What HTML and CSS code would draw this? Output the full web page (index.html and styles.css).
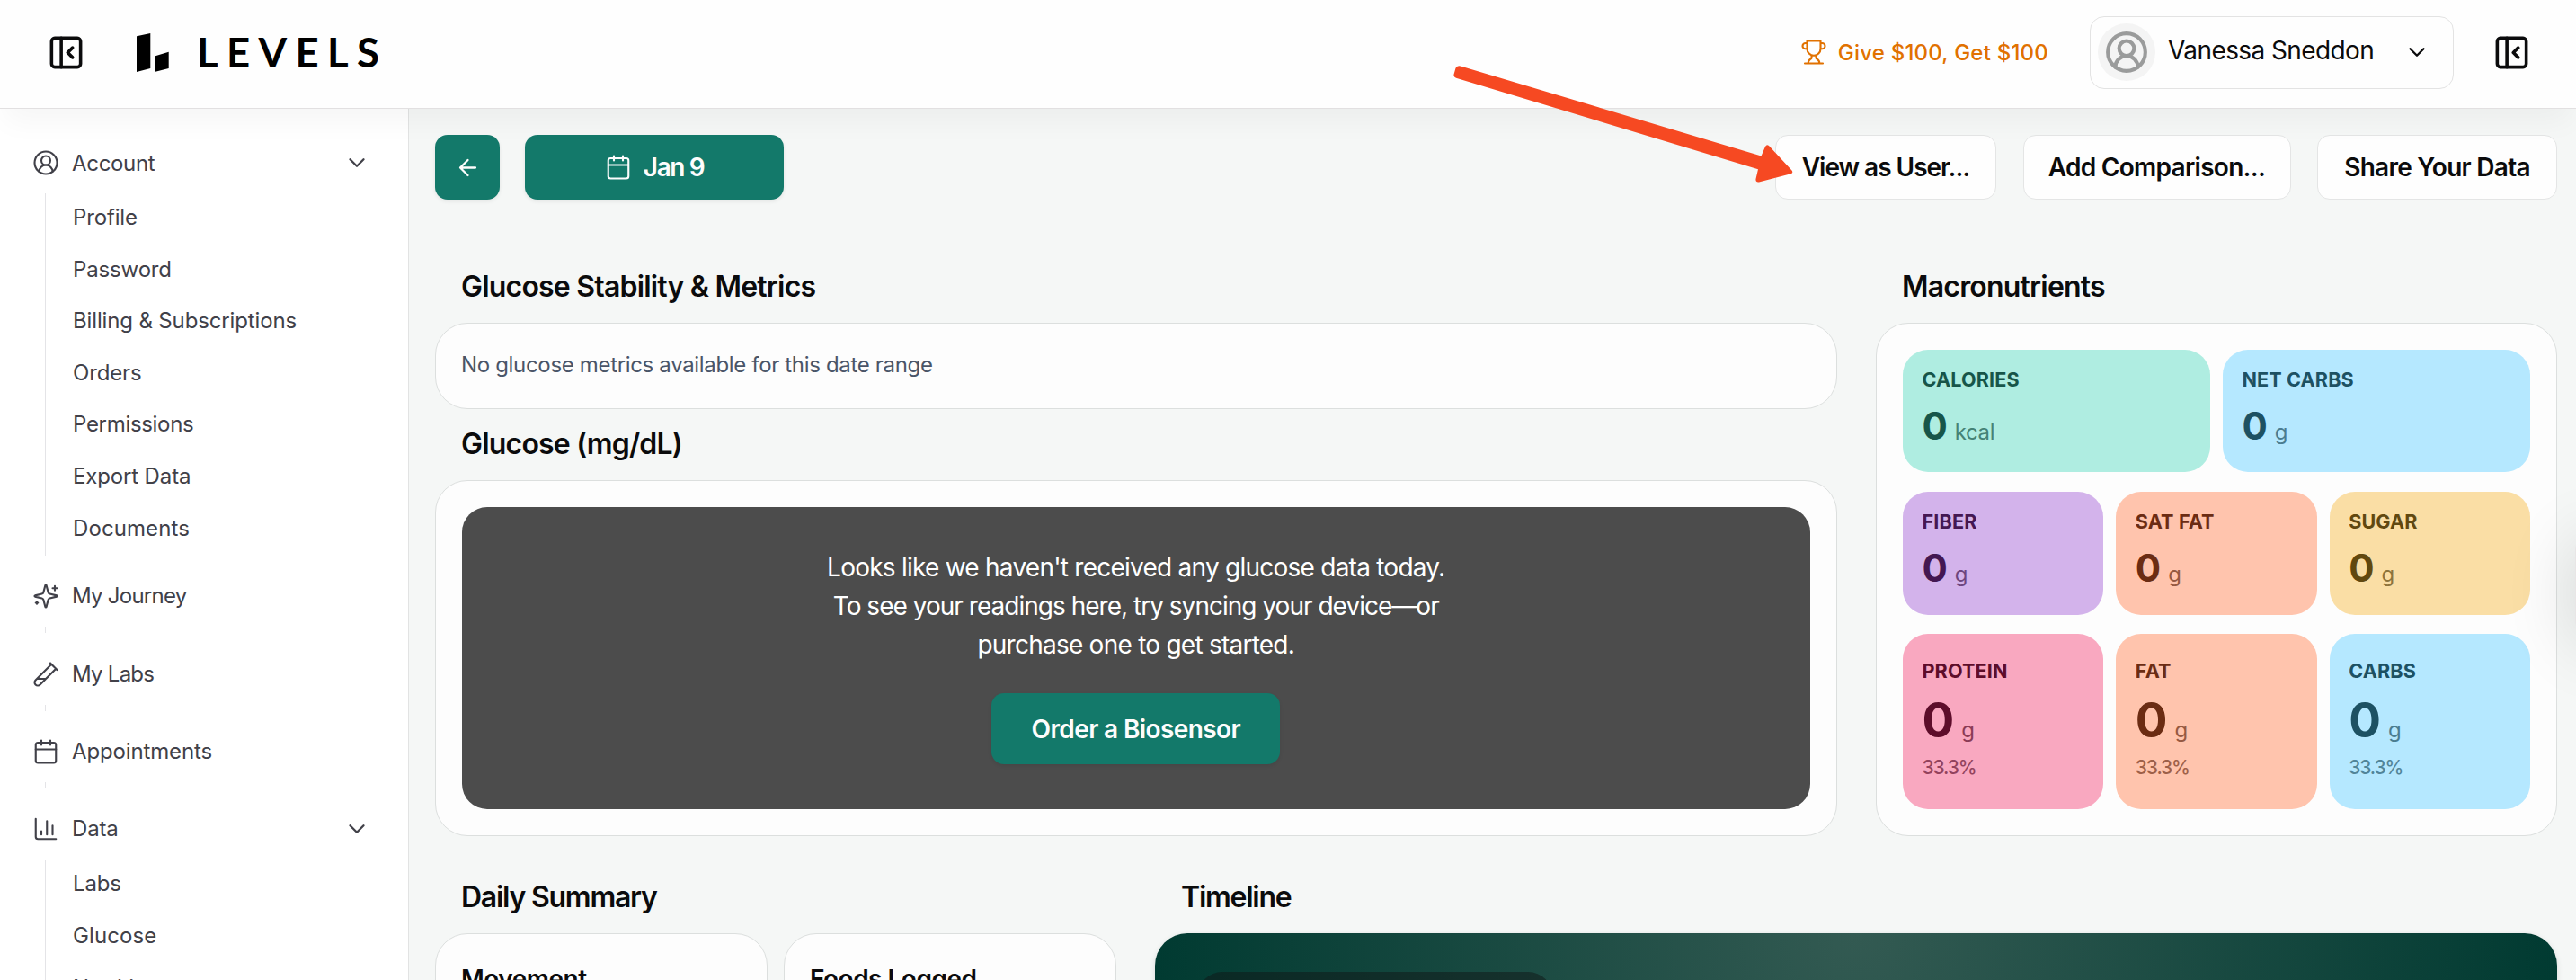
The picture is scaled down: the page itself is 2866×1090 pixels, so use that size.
FILE: index.html
```html
<!DOCTYPE html>
<html lang="en">
<head>
<meta charset="utf-8">
<title>Levels</title>
<link rel="stylesheet" href="styles.css">
</head>
<body>
<svg class="sprite" aria-hidden="true">
  <symbol id="panel" viewBox="0 0 24 24"><rect x="3" y="3" width="18" height="18" rx="2"/><path d="M9 3v18M16 15l-3-3 3-3"/></symbol>
  <symbol id="chevron" viewBox="0 0 24 24"><path d="m6 9 6 6 6-6"/></symbol>
  <symbol id="user" viewBox="0 0 24 24"><path d="M18 20a6 6 0 0 0-12 0"/><circle cx="12" cy="10" r="4"/><circle cx="12" cy="12" r="10"/></symbol>
  <symbol id="calendar" viewBox="0 0 24 24"><path d="M8 2v4M16 2v4M3 10h18"/><rect x="3" y="4" width="18" height="18" rx="2"/></symbol>
</svg>

<header class="header">
  <svg class="icon panel-icon"><use href="#panel"/></svg>
  <div class="brand">
    <svg class="mark" viewBox="0 0 36 43"><path d="M0 3.3 15.3 0v39L0 43zM20 25.4l15.7-4.7V39L20 43z"/></svg>
    <span class="wordmark">LEVELS</span>
  </div>
  <a class="referral">
    <svg class="icon" viewBox="0 0 24 24"><path d="M6 9H4.5a2.5 2.5 0 0 1 0-5H6M18 9h1.5a2.5 2.5 0 0 0 0-5H18M4 22h16M10 14.66V17c0 .55-.47.98-.97 1.21C7.85 18.75 7 20.24 7 22M14 14.66V17c0 .55.47.98.97 1.21C16.15 18.75 17 20.24 17 22M18 2H6v7a6 6 0 0 0 12 0V2Z"/></svg>
    <span>Give $100, Get $100</span>
  </a>
  <div class="account-menu">
    <span class="avatar"><svg class="icon"><use href="#user"/></svg></span>
    <span class="name">Vanessa Sneddon</span>
    <svg class="icon"><use href="#chevron"/></svg>
  </div>
  <svg class="icon panel-icon"><use href="#panel"/></svg>
</header>

<div class="body">
  <nav class="sidebar">
    <div class="item"><svg class="icon"><use href="#user"/></svg><span class="snug">Account</span><svg class="icon caret"><use href="#chevron"/></svg></div>
    <div class="sub">
      <a>Profile</a><a>Password</a><a>Billing &amp; Subscriptions</a><a>Orders</a><a class="snug">Permissions</a><a>Export Data</a><a class="loose">Documents</a>
    </div>
    <div class="item"><svg class="icon" viewBox="0 0 24 24"><path d="M9.937 15.5A2 2 0 0 0 8.5 14.063l-6.135-1.582a.5.5 0 0 1 0-.962L8.5 9.936A2 2 0 0 0 9.937 8.5l1.582-6.135a.5.5 0 0 1 .963 0L14.063 8.5A2 2 0 0 0 15.5 9.937l6.135 1.581a.5.5 0 0 1 0 .964L15.5 14.063a2 2 0 0 0-1.437 1.437l-1.582 6.135a.5.5 0 0 1-.963 0zM20 3v4M22 5h-4M4 17v2M5 18H3"/></svg><span class="tight">My Journey</span></div>
    <div class="sub"></div>
    <div class="item"><svg class="icon" viewBox="0 0 24 24"><path d="M21 7 6.82 21.18a2.83 2.83 0 0 1-3.99-.01a2.83 2.83 0 0 1 0-4L17 3M16 2l6 6M12 16H4"/></svg><span class="tight">My Labs</span></div>
    <div class="sub"></div>
    <div class="item"><svg class="icon"><use href="#calendar"/></svg><span>Appointments</span></div>
    <div class="sub"></div>
    <div class="item"><svg class="icon" viewBox="0 0 24 24"><path d="M3 3v16a2 2 0 0 0 2 2h16M18 17V9M13 17V5M8 17v-3"/></svg><span>Data</span><svg class="icon caret"><use href="#chevron"/></svg></div>
    <div class="sub">
      <a>Labs</a><a class="loose">Glucose</a><a>Nutrition</a>
    </div>
  </nav>

  <main class="main">
    <div class="toolbar">
      <button class="btn primary back"><svg class="icon" viewBox="0 0 24 24"><path d="m12 19-7-7 7-7M19 12H5"/></svg></button>
      <button class="btn primary date"><svg class="icon"><use href="#calendar"/></svg><span>Jan 9</span></button>
      <button class="btn plain view"><span>View as User...</span></button>
      <button class="btn plain compare"><span>Add Comparison...</span></button>
      <button class="btn plain share"><span>Share Your Data</span></button>
    </div>

    <div class="overview">
      <section class="glucose">
        <h2>Glucose Stability &amp; Metrics</h2>
        <div class="card notice">No glucose metrics available for this date range</div>
        <h2>Glucose (mg/dL)</h2>
        <div class="card chart">
          <div class="empty">
            <p>Looks like we haven't received any glucose data today.<br><span class="condensed">To see your readings here, try syncing your device—or</span><br>purchase one to get started.</p>
            <button class="btn primary order">Order a Biosensor</button>
          </div>
        </div>
      </section>
      <section class="macros">
        <h2>Macronutrients</h2>
        <div class="card tiles">
          <div class="tile half mint"><b>CALORIES</b><div><strong>0</strong><i>kcal</i></div></div>
          <div class="tile half blue"><b>NET CARBS</b><div><strong>0</strong><i>g</i></div></div>
          <div class="tile purple"><b>FIBER</b><div><strong>0</strong><i>g</i></div></div>
          <div class="tile peach"><b>SAT FAT</b><div><strong>0</strong><i>g</i></div></div>
          <div class="tile yellow"><b>SUGAR</b><div><strong>0</strong><i>g</i></div></div>
          <div class="tile big pink"><b>PROTEIN</b><div><strong>0</strong><i>g</i></div><em>33.3%</em></div>
          <div class="tile big peach"><b>FAT</b><div><strong>0</strong><i>g</i></div><em>33.3%</em></div>
          <div class="tile big blue"><b>CARBS</b><div><strong>0</strong><i>g</i></div><em>33.3%</em></div>
        </div>
      </section>
    </div>

    <div class="day">
      <section>
        <h2 class="close">Daily Summary</h2>
        <div class="summary">
          <div class="card metric">Movement</div>
          <div class="card metric">Foods Logged</div>
        </div>
      </section>
      <section>
        <h2 class="close">Timeline</h2>
        <div class="timeline"><div class="entry"></div></div>
      </section>
    </div>
  </main>
</div>

<div class="edge-widget"></div>
<svg class="pointer" viewBox="0 0 384 136"><path d="M9 4.5 343.5 104.500l4.500-10.500q1.500-3 4-1l25.500 27.500q2 2.800-1 3.800L341 133.500q-4 .5-3.500-3.500L340 119.200 4 17.700q-3-1-2.500-4L3.500 6.800q1.500-3.500 5.500-2.300z"/></svg>
</body>
</html>
```
FILE: styles.css
```css
* { box-sizing: border-box; }

body {
  margin: 0;
  width: 2866px;
  height: 1090px;
  overflow: hidden;
  display: flex;
  flex-direction: column;
  font-family: "Inter", sans-serif;
  font-size: 24px;
  letter-spacing: -.006em;
  color: #0b0b0c;
  background: #f5f7f6;
}

h2, p { margin: 0; }
.sprite { display: none; }

.icon {
  width: 30px;
  height: 30px;
  flex: none;
  fill: none;
  stroke: currentColor;
  stroke-width: 1.7;
  stroke-linecap: round;
  stroke-linejoin: round;
}

.snug { letter-spacing: -.013em; }
.tight { letter-spacing: -.031em; }
.loose { letter-spacing: .004em; }

/* Header */
.header {
  position: relative;
  z-index: 2;
  flex: none;
  display: flex;
  align-items: center;
  height: 121px;
  padding: 0 50px 4px 52px;
  background: #fefefe;
  border-bottom: 1px solid #e2e0e1;
  box-shadow: 0 20px 30px -6px rgba(0, 0, 0, .04);
}
.panel-icon { width: 43px; height: 43px; stroke-width: 2; }
.brand { display: flex; align-items: center; margin: 0 auto 0 57px; color: #000; }
.mark { width: 36px; height: 43px; }
.wordmark {
  margin-left: 31px;
  font: 700 45.5px/44px "Lato", sans-serif;
  letter-spacing: .206em;
}
.referral {
  display: flex;
  align-items: center;
  gap: 12px;
  color: #e17100;
  font-weight: 500;
  letter-spacing: .009em;
}
.account-menu {
  display: flex;
  align-items: center;
  width: 405px;
  height: 81px;
  margin: 0 43px 0 46px;
  padding: 0 25px 0 8px;
  border: 1px solid #e3e3e3;
  border-radius: 16px;
}
.account-menu > .icon { stroke-width: 1.9; }
.avatar {
  display: flex;
  align-items: center;
  justify-content: center;
  width: 64px;
  height: 64px;
  border-radius: 50%;
  background: #f4f4f4;
  color: #9a9b9b;
}
.avatar .icon { width: 50px; height: 50px; stroke-width: 2; }
.name { margin: -4px auto 0 14px; font-size: 28px; letter-spacing: -.021em; }

.body { flex: 1; display: flex; min-height: 0; }

/* Sidebar */
.sidebar {
  flex: none;
  width: 455px;
  height: 969px;
  overflow: hidden;
  padding-top: 26px;
  background: #fff;
  border-right: 1px solid #e2e3e3;
  color: #414149;
}
.item { display: flex; align-items: center; height: 68px; padding: 0 42px 0 36px; }
.item span { margin-left: 14px; }
.item span:not(.snug) { margin-top: -1px; }
.caret { margin-left: auto; stroke-width: 1.9; }
.sub {
  min-height: 7px;
  margin: 0 0 11.3px 50px;
  border-left: 1px solid #e4e4e7;
}
.sub a { display: block; height: 57.6px; padding-left: 30px; line-height: 54px; }

/* Main */
.main { flex: 1; padding: 29px 21px 0 29px; height: 969px; overflow: hidden; }
.toolbar { display: flex; height: 72px; margin-bottom: 58px; }
.btn {
  display: flex;
  align-items: center;
  justify-content: center;
  padding: 0;
  border: 0;
  border-radius: 14px;
  font: 600 28px "Inter", sans-serif;
  color: inherit;
}
.primary { background: #13796a; color: #fdfdfd; box-shadow: 0 2px 4px rgba(0, 0, 0, .08); }
.plain { background: #fefefe; border: 1px solid #e4e5e5; margin-left: 29.5px; letter-spacing: -.026em; }
.back { width: 72px; }
.back .icon { width: 29px; height: 29px; stroke-width: 1.9; }
.date { width: 288px; margin: 0 auto 0 28px; gap: 13px; letter-spacing: -.05em; }
.view { width: 246px; letter-spacing: -.036em; }
.compare { width: 298px; }
.share { width: 267px; }

h2 {
  height: 79px;
  padding: 0 0 2px 29px;
  font-size: 32px;
  font-weight: 600;
  line-height: 77px;
  letter-spacing: -.025em;
}
h2.close { letter-spacing: -.039em; }
.card { background: #fdfdfd; border: 1px solid #dcdfde; border-radius: 36px; }

.overview { display: grid; grid-template-columns: 1559.5px 758px; gap: 43.5px; height: 649.5px; }
.glucose { display: flex; flex-direction: column; }
.notice { height: 96px; padding: 0 28px; line-height: 91px; color: #4a5568; letter-spacing: -.0139em; }
.chart { flex: 1; padding: 29px 28.5px; display: flex; }
.empty {
  flex: 1;
  display: flex;
  flex-direction: column;
  align-items: center;
  padding-top: 46px;
  border-radius: 28px;
  background: #4c4c4c;
  color: #fff;
}
.empty p { font-size: 28px; line-height: 43px; text-align: center; letter-spacing: -.027em; }
.condensed { letter-spacing: -.035em; }
.order { width: 321px; height: 79px; margin-top: 32px; letter-spacing: -.022em; }

/* Macro tiles */
.macros { display: flex; flex-direction: column; }
.tiles {
  flex: 1;
  display: grid;
  grid-template-columns: repeat(6, 1fr);
  grid-template-rows: 136px 137px 195px;
  column-gap: 14px;
  row-gap: 21.5px;
  padding: 29px;
}
.tile { grid-column: span 2; border-radius: 28px; padding: 18px 21.5px 0; }
.half { grid-column: span 3; }
.tile b { display: block; font-size: 21.6px; font-weight: 700; line-height: 30px; letter-spacing: .006em; }
.tile div { display: flex; align-items: baseline; margin-top: 11px; line-height: 52px; }
.tile strong { font-size: 42px; font-weight: 700; letter-spacing: 0; }
.tile i { margin-left: 8px; font-style: normal; letter-spacing: -.017em; opacity: .7; }
.tile em { display: block; margin-top: 3px; font-style: normal; font-size: 21px; font-weight: 500; line-height: 26px; letter-spacing: -.055em; opacity: .65; }
.big { padding-top: 26px; }
.big strong { font-size: 53px; }
.big div { margin-top: 14px; }
.mint { background: #afede1; color: #175549; }
.blue { background: #b5e8ff; color: #1d5163; }
.purple { background: #d3b3eb; color: #441752; }
.peach { background: #ffc4ad; color: #6b2c13; }
.yellow { background: #fadea5; color: #61480f; }
.pink { background: #f9a8c0; color: #5d0d2a; }

/* Lower row */
.day { display: grid; grid-template-columns: 757.5px 1560px; gap: 43.5px; margin-top: 29.5px; }
.summary { display: grid; grid-template-columns: 1fr 1fr; gap: 18.5px; }
.metric { height: 300px; padding: 26px 28px; font-size: 28px; font-weight: 600; line-height: 48px; letter-spacing: -.018em; }
.timeline {
  height: 300px;
  padding: 43px 47px;
  border-radius: 36px;
  background: radial-gradient(circle 790px at 50% 0, #335a52, #003a31);
  box-shadow: 0 2px 6px rgba(0, 0, 0, .12);
}
.entry { width: 396px; height: 120px; border-radius: 28px; background: rgba(16, 22, 22, .5); }

/* Floating layers */
.edge-widget {
  position: absolute;
  z-index: 3;
  top: 596px;
  left: 2865px;
  width: 80px;
  height: 110px;
  border-radius: 16px;
  background: #e8e6e6;
  box-shadow: 0 8px 80px rgba(0, 0, 0, .14);
}
.pointer {
  position: absolute;
  z-index: 4;
  left: 1616px;
  top: 69px;
  width: 384px;
  height: 136px;
  fill: #f64922;
}
```
